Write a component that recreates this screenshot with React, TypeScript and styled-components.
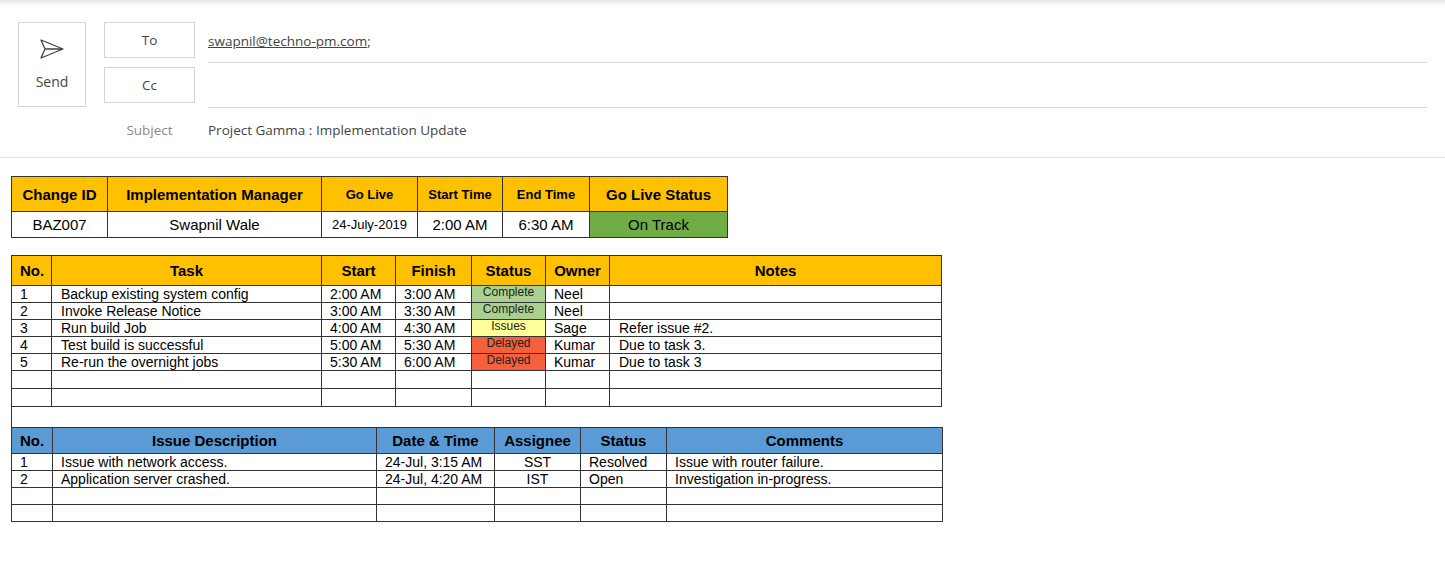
import React from "react";
import styled, { createGlobalStyle } from "styled-components";

const Global = createGlobalStyle`
  body { margin: 0; background: #fff; font-family: "Liberation Sans", Arial, sans-serif; }
`;

const Page = styled.div`
  width: 1445px; height: 588px; position: relative; overflow: hidden;
  background: linear-gradient(#e6e6e6, #fff 6px);
`;

const Header = styled.div`
  display: flex; gap: 18px; padding: 22px 18px 0 18px;
  font-family: "Open Sans", "Noto Sans", sans-serif; color: #444;
`;

const SendBtn = styled.div`
  width: 68px; height: 85px; border: 1px solid #d4d4d4; box-sizing: border-box;
  display: flex; flex-direction: column; align-items: center; justify-content: center; gap: 12px;
  font-size: 14px; color: #444;
`;

const Fields = styled.div`flex: 1; display: flex; flex-direction: column;`;

const FieldRow = styled.div<{ $h: number }>`
  display: flex; align-items: flex-start; gap: 13px; height: ${p => p.$h}px;
`;

const FieldBtn = styled.div`
  width: 91px; height: 36px; box-sizing: border-box; border: 1px solid #d4d4d4;
  display: flex; align-items: center; justify-content: center; font-size: 13.5px; color: #444;
`;

const FieldLabel = styled.div`
  width: 91px; text-align: center; font-size: 13.5px; color: #888; padding-top: 9px;
`;

const FieldValue = styled.div<{ $line?: boolean }>`
  flex: 1; height: 41px; box-sizing: border-box; font-size: 13.5px; color: #444;
  padding-top: 10px; border-bottom: ${p => (p.$line ? "1px solid #d8d8d8" : "none")};
`;

const SubjectValue = styled.div`flex: 1; font-size: 13.5px; color: #444; padding-top: 9px;`;

const Email = styled.span`text-decoration: underline;`;

const Divider = styled.div`height: 1px; background: #e3e3e3; margin-top: 6px;`;

const Body = styled.div`padding: 18px 0 0 11px;`;

const Table = styled.table<{ $w: number }>`
  border-collapse: collapse; table-layout: fixed; width: ${p => p.$w}px;
  font-family: "Liberation Sans", Arial, sans-serif; color: #000;
`;

const Th = styled.th<{ $bg: string; $fs: number; $h: number }>`
  background: ${p => p.$bg}; border: 1px solid #333; font-size: ${p => p.$fs}px;
  font-weight: bold; height: ${p => p.$h}px; padding: 0; text-align: center;
`;

const Td = styled.td<{ $align?: string; $bg?: string; $fs?: number; $h: number; $pl?: number }>`
  border: 1px solid #333; height: ${p => p.$h}px; padding: 0 0 0 ${p => p.$pl ?? 0}px;
  font-size: ${p => p.$fs ?? 14}px; text-align: ${p => p.$align ?? "left"};
  background: ${p => p.$bg ?? "transparent"}; line-height: 1; white-space: nowrap; overflow: hidden;
`;

const StatusTd = styled(Td)`font-size: 12px; color: #222; vertical-align: top; padding-top: 0;`;

const Spacer = styled.div<{ $h: number; $edge?: boolean }>`
  height: ${p => p.$h}px; border-left: ${p => (p.$edge ? "1px solid #333" : "none")};
`;

const ORANGE = "#FFC000";
const BLUE = "#5B9BD5";
const statusBg: Record<string, string> = { Complete: "#A9D08E", Issues: "#FFFF99", Delayed: "#F4603C" };

const tasks = [
  ["1", "Backup existing system config", "2:00 AM", "3:00 AM", "Complete", "Neel", ""],
  ["2", "Invoke Release Notice", "3:00 AM", "3:30 AM", "Complete", "Neel", ""],
  ["3", "Run build Job", "4:00 AM", "4:30 AM", "Issues", "Sage", "Refer issue #2."],
  ["4", "Test build is successful", "5:00 AM", "5:30 AM", "Delayed", "Kumar", "Due to task 3."],
  ["5", "Re-run the overnight jobs", "5:30 AM", "6:00 AM", "Delayed", "Kumar", "Due to task 3"],
  ["", "", "", "", "", "", ""],
  ["", "", "", "", "", "", ""],
];

const issues = [
  ["1", "Issue with network access.", "24-Jul, 3:15 AM", "SST", "Resolved", "Issue with router failure."],
  ["2", "Application server crashed.", "24-Jul, 4:20 AM", "IST", "Open", "Investigation in-progress."],
  ["", "", "", "", "", ""],
  ["", "", "", "", "", ""],
];

const rowH = [16, 16, 16, 16, 16, 17, 17];

export default function App() {
  return (
    <Page>
      <Global />
      <Header>
        <SendBtn>
          <svg width="26" height="22" viewBox="0 0 26 22" fill="none" stroke="#444" strokeWidth="1.3" strokeLinejoin="round">
            <path d="M2 2 L24 11 L2 20 L6 11 Z M6 11 H24" />
          </svg>
          <span>Send</span>
        </SendBtn>
        <Fields>
          <FieldRow $h={45}>
            <FieldBtn>To</FieldBtn>
            <FieldValue $line><Email>swapnil@techno-pm.com</Email>;</FieldValue>
          </FieldRow>
          <FieldRow $h={45}>
            <FieldBtn>Cc</FieldBtn>
            <FieldValue $line />
          </FieldRow>
          <FieldRow $h={39}>
            <FieldLabel>Subject</FieldLabel>
            <SubjectValue>Project Gamma : Implementation Update</SubjectValue>
          </FieldRow>
        </Fields>
      </Header>
      <Divider />
      <Body>
        <Table $w={716}>
          <colgroup>
            {[96, 214, 96, 85, 87, 138].map((w, i) => <col key={i} style={{ width: w }} />)}
          </colgroup>
          <thead>
            <tr>
              <Th $bg={ORANGE} $fs={15} $h={34}>Change ID</Th>
              <Th $bg={ORANGE} $fs={15} $h={34}>Implementation Manager</Th>
              <Th $bg={ORANGE} $fs={13} $h={34}>Go Live</Th>
              <Th $bg={ORANGE} $fs={13} $h={34}>Start Time</Th>
              <Th $bg={ORANGE} $fs={13} $h={34}>End Time</Th>
              <Th $bg={ORANGE} $fs={15} $h={34}>Go Live Status</Th>
            </tr>
          </thead>
          <tbody>
            <tr>
              <Td $h={25} $align="center" $fs={15}>BAZ007</Td>
              <Td $h={25} $align="center" $fs={15}>Swapnil Wale</Td>
              <Td $h={25} $align="center" $fs={13}>24-July-2019</Td>
              <Td $h={25} $align="center" $fs={15}>2:00 AM</Td>
              <Td $h={25} $align="center" $fs={15}>6:30 AM</Td>
              <Td $h={25} $align="center" $fs={15} $bg="#70AD47">On Track</Td>
            </tr>
          </tbody>
        </Table>
        <Spacer $h={17} />
        <Table $w={930}>
          <colgroup>
            {[40, 270, 74, 76, 74, 64, 332].map((w, i) => <col key={i} style={{ width: w }} />)}
          </colgroup>
          <thead>
            <tr>
              {["No.", "Task", "Start", "Finish", "Status", "Owner", "Notes"].map(h => (
                <Th key={h} $bg={ORANGE} $fs={15} $h={29} style={h === "No." ? { textAlign: "left", paddingLeft: 8 } : undefined}>{h}</Th>
              ))}
            </tr>
          </thead>
          <tbody>
            {tasks.map((r, i) => (
              <tr key={i}>
                <Td $h={rowH[i]} $pl={8}>{r[0]}</Td>
                <Td $h={rowH[i]} $pl={9}>{r[1]}</Td>
                <Td $h={rowH[i]} $pl={8}>{r[2]}</Td>
                <Td $h={rowH[i]} $pl={8}>{r[3]}</Td>
                <StatusTd $h={rowH[i]} $align="center" $bg={statusBg[r[4]]}>{r[4]}</StatusTd>
                <Td $h={rowH[i]} $pl={8}>{r[5]}</Td>
                <Td $h={rowH[i]} $pl={9}>{r[6]}</Td>
              </tr>
            ))}
          </tbody>
        </Table>
        <Spacer $h={20} $edge />
        <Table $w={931}>
          <colgroup>
            {[41, 324, 118, 86, 86, 276].map((w, i) => <col key={i} style={{ width: w }} />)}
          </colgroup>
          <thead>
            <tr>
              {["No.", "Issue Description", "Date & Time", "Assignee", "Status", "Comments"].map(h => (
                <Th key={h} $bg={BLUE} $fs={15} $h={25} style={h === "No." ? { textAlign: "left", paddingLeft: 8 } : undefined}>{h}</Th>
              ))}
            </tr>
          </thead>
          <tbody>
            {issues.map((r, i) => (
              <tr key={i}>
                <Td $h={16} $pl={8}>{r[0]}</Td>
                <Td $h={16} $pl={8}>{r[1]}</Td>
                <Td $h={16} $pl={8}>{r[2]}</Td>
                <Td $h={16} $align="center">{r[3]}</Td>
                <Td $h={16} $pl={8}>{r[4]}</Td>
                <Td $h={16} $pl={8}>{r[5]}</Td>
              </tr>
            ))}
          </tbody>
        </Table>
      </Body>
    </Page>
  );
}
